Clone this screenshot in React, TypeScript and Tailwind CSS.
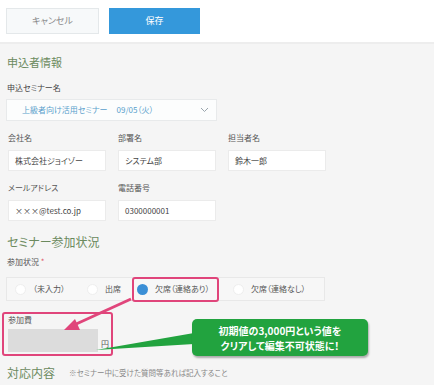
import React from 'react';

const font = { fontFamily: '"Noto Sans CJK JP", "Noto Sans", sans-serif', fontFeatureSettings: '"palt"' };

function Field({ label, value }: { label: string; value: string }) {
  return (
    <div className="flex flex-col w-[98px]">
      <span className="text-[8px] leading-[12px] text-[#555] whitespace-nowrap">{label}</span>
      <div className="mt-[6px] h-[21px] bg-white border border-[#ebebeb] flex items-center pl-[6px] text-[8px] text-[#444] whitespace-nowrap">
        {value}
      </div>
    </div>
  );
}

function Radio({ label, checked = false }: { label: string; checked?: boolean }) {
  return (
    <div className="flex items-center text-[8px] text-[#555] whitespace-nowrap">
      <span
        className={`w-[11px] h-[11px] rounded-full shrink-0 ${checked ? 'bg-[#3b8fd6]' : 'bg-white border border-[#eeeeee]'}`}
      />
      <span className="ml-[7px]">{label}</span>
    </div>
  );
}

export default function App() {
  return (
    <div className="relative w-[434px] h-[385px] overflow-hidden bg-[#f5f5f5]" style={font}>
      {/* Header */}
      <div className="h-[44px] bg-white border-b-2 border-[#ededed] flex items-start gap-[10px] pl-[6px] pt-[8px]">
        <button className="w-[93px] h-[26px] bg-[#f7f9fa] border border-[#e4e8ea] text-[9px] text-[#8a8a8a]">
          キャンセル
        </button>
        <button className="w-[91px] h-[26px] bg-[#3498db] text-[9px] text-white">保存</button>
      </div>

      <div className="px-[7px]">
        <h2 className="mt-[10px] text-[11px] leading-[16px] text-[#6b8a5e]">申込者情報</h2>
        <p className="mt-[12px] text-[8px] leading-[12px] text-[#444]">申込セミナー名</p>

        {/* Select */}
        <div className="mt-[5px] -ml-[1px] w-[211px] h-[22px] bg-[#fcfdfd] border border-[#e8eaeb] flex items-center pl-[15px] pr-[7px] text-[8px] text-[#5a9fcc] whitespace-nowrap">
          <span>上級者向け活用セミナー</span>
          <span className="ml-[9px]">09/05（火）</span>
          <svg className="ml-auto" width="9" height="6" viewBox="0 0 9 6">
            <path d="M1 1l3.5 3.5L8 1" fill="none" stroke="#9aa5ad" strokeWidth="1" />
          </svg>
        </div>

        <div className="mt-[11px] flex gap-[12px] pl-[1px]">
          <Field label="会社名" value="株式会社ジョイゾー" />
          <Field label="部署名" value="システム部" />
          <Field label="担当者名" value="鈴木一郎" />
        </div>
        <div className="mt-[11px] flex gap-[12px] pl-[1px]">
          <Field label="メールアドレス" value="×××@test.co.jp" />
          <Field label="電話番号" value="0300000001" />
        </div>

        <h2 className="mt-[13px] text-[12px] leading-[16px] text-[#6b8a5e]">セミナー参加状況</h2>
        <p className="mt-[6px] text-[8px] leading-[12px] text-[#555]">
          参加状況 <span className="text-[#e05a6a]">*</span>
        </p>

        {/* Radio group */}
        <div className="mt-[9px] -ml-[1px] w-[319px] h-[24px] bg-[#f7f7f7] border border-[#e8e8e8] flex items-center pl-[8px]">
          <div className="w-[72px]">
            <Radio label="（未入力）" />
          </div>
          <div className="w-[45px]">
            <Radio label="出席" />
          </div>
          <div className="w-[87px] h-[25px] pl-[3px] border-2 border-[#e0457b] rounded-[3px] flex items-center -my-[1px]">
            <Radio label="欠席（連絡あり）" checked />
          </div>
          <div className="ml-[14px]">
            <Radio label="欠席（連絡なし）" />
          </div>
        </div>

        {/* 参加費 */}
        <div className="mt-[11px] -ml-[5px] w-[111px] h-[44px] border-2 border-[#e0457b] rounded-[3px] pl-[4px]">
          <p className="text-[8px] leading-[12px] text-[#555]">参加費</p>
          <div className="mt-[3px] flex items-end gap-[3px]">
            <div className="w-[90px] h-[23px] bg-[#dcdcdc]" />
            <span className="text-[8px] leading-[12px] text-[#555] mb-[2px]">円</span>
          </div>
        </div>

        <div className="mt-[9px] flex items-center whitespace-nowrap">
          <span className="text-[12px] leading-[16px] text-[#6b8a5e]">対応内容</span>
          <span className="ml-[14px] text-[7.5px] text-[#888]">※セミナー中に受けた質問等あれば記入すること</span>
        </div>
      </div>

      {/* Annotation arrow */}
      <svg className="absolute left-0 top-0 pointer-events-none" width="434" height="385">
        <line x1="131" y1="299" x2="74" y2="325" stroke="#e0457b" strokeWidth="3" />
        <polygon points="64,330 75,319 80,330" fill="#e0457b" />
        <polygon points="96,350 194,333 194,344" fill="#22a33f" />
      </svg>

      {/* Callout */}
      <div className="absolute left-[192px] top-[319px] w-[176px] h-[37px] bg-[#22a33f] rounded-[5px] shadow-[1px_2px_2px_rgba(0,0,0,0.3)] flex flex-col items-center justify-center text-white text-[10px] leading-[15px] font-bold whitespace-nowrap">
        <span>初期値の3,000円という値を</span>
        <span>クリアして編集不可状態に！</span>
      </div>
    </div>
  );
}
